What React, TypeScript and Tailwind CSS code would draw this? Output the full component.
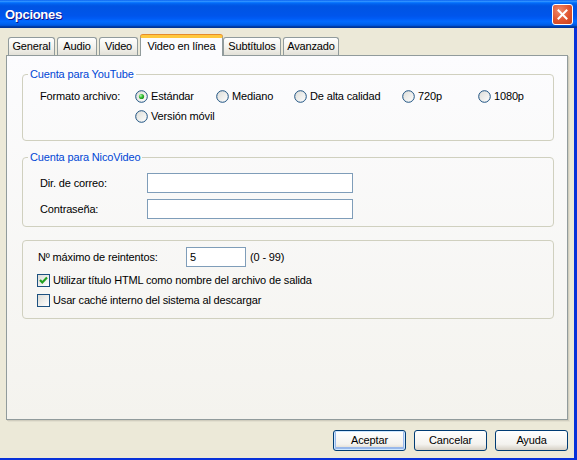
import React from 'react';

// Diálogo "Opciones" al estilo Windows XP (Luna), pestaña "Video en línea" activa.

const tabs = [
  { label: 'General', w: 'w-[47px]' },
  { label: 'Audio', w: 'w-[40px]' },
  { label: 'Video', w: 'w-[39px]' },
  { label: 'Video en línea', w: 'w-[83px]', active: true },
  { label: 'Subtítulos', w: 'w-[58px]' },
  { label: 'Avanzado', w: 'w-[56px]' },
];

function Radio({ checked = false }: { checked?: boolean }) {
  return (
    <svg width="13" height="13" viewBox="0 0 13 13" className="shrink-0">
      <defs>
        <linearGradient id="xpRadio" x1="0" y1="0" x2="1" y2="1">
          <stop offset="0" stopColor="#DCDCD7" />
          <stop offset="1" stopColor="#FFFFFF" />
        </linearGradient>
        <radialGradient id="xpDot" cx="0.35" cy="0.35" r="0.7">
          <stop offset="0" stopColor="#B9F3B9" />
          <stop offset="0.5" stopColor="#3AC43A" />
          <stop offset="1" stopColor="#1D8B1D" />
        </radialGradient>
      </defs>
      <circle cx="6.5" cy="6.5" r="5.8" fill="url(#xpRadio)" stroke="#1C5180" strokeWidth="1" />
      {checked && <circle cx="6.5" cy="6.5" r="2.6" fill="url(#xpDot)" />}
    </svg>
  );
}

function Checkbox({ checked = false }: { checked?: boolean }) {
  return (
    <span className="w-[13px] h-[13px] shrink-0 border border-[#1C5180] bg-[linear-gradient(135deg,#DCDCD7,#FFFFFF)] flex items-center justify-center">
      {checked && (
        <svg width="11" height="11" viewBox="0 0 11 11">
          <path d="M2 5 L4.3 7.5 L9 2.6" fill="none" stroke="#21A121" strokeWidth="2.2" />
        </svg>
      )}
    </span>
  );
}

function Option({ label, checked, w }: { label: string; checked?: boolean; w: string }) {
  return (
    <div className={`${w} flex items-center gap-[3px]`}>
      <Radio checked={checked} />
      <span>{label}</span>
    </div>
  );
}

function XpButton({ label, def }: { label: string; def?: boolean }) {
  return (
    <button
      className={`w-[73px] h-[21px] rounded-[3px] border border-[#003C74] bg-[linear-gradient(to_bottom,#FFFFFF,#F3F2EE_70%,#D6D0C5)] text-black ${
        def ? 'shadow-[inset_0_0_0_1px_#CEE7FF,inset_0_-1px_0_2px_#98B8EA]' : ''
      }`}
    >
      {label}
    </button>
  );
}

export default function App() {
  return (
    <div className="w-[577px] h-[460px] flex flex-col bg-[#ECE9D8] font-['Liberation_Sans',Arial,sans-serif] text-[11px] tracking-[-0.15px] text-black overflow-hidden">
      {/* barra de título */}
      <div className="h-[28px] shrink-0 flex items-center justify-between pl-[5px] pr-[4px] bg-[linear-gradient(to_bottom,#0058EE_0%,#3593FF_4%,#288EFF_6%,#127DFF_8%,#036FFC_10%,#0262EE_14%,#0057E5_20%,#0054E3_24%,#0055EB_56%,#005BF5_66%,#026AFE_76%,#0062EF_86%,#0052D6_92%,#0040AB_94%,#003092_100%)]">
        <span className="text-white font-bold text-[13px] tracking-[-0.3px] pt-[2px] [text-shadow:1px_1px_#0F1089]">Opciones</span>
        <div className="w-[21px] h-[21px] rounded-[3px] border border-white bg-[radial-gradient(circle_at_35%_30%,#F08A6C,#E0542F_55%,#C6411F)] flex items-center justify-center mt-[1px]">
          <svg width="11" height="11" viewBox="0 0 11 11">
            <path d="M1.5 1.5 L9.5 9.5 M9.5 1.5 L1.5 9.5" stroke="white" strokeWidth="2" strokeLinecap="square" />
          </svg>
        </div>
      </div>

      {/* cuerpo */}
      <div className="flex-1 flex flex-col pt-[7px] pl-[6px] pr-[6px] border-r-[3px] border-b-[2px] border-[#0831D9]">
        <div className="flex items-end gap-[2px] pl-[2px] -mb-px relative z-10">
          {tabs.map((t) =>
            t.active ? (
              <div
                key={t.label}
                className={`${t.w} -mr-[2px] h-[21px] flex items-center justify-center pb-[2px] rounded-t-[3px] border-x border-[#919B9C] border-t-[3px] border-t-[#FFC83C] shadow-[0_-1px_0_#E68B2C] bg-[#FCFCFE]`}
              >
                {t.label}
              </div>
            ) : (
              <div
                key={t.label}
                className={`${t.w} h-[18px] mb-[1px] flex items-center justify-center rounded-t-[3px] border-x border-t border-[#919B9C] bg-[linear-gradient(to_bottom,#FFFFFF,#F1F0EA_60%,#E3E1D8)]`}
              >
                {t.label}
              </div>
            )
          )}
        </div>

        <div className="flex-1 border border-[#919B9C] bg-[linear-gradient(to_bottom,#FCFCFE,#F4F3EE)] shadow-[1px_1px_0_#D0CDBE,2px_2px_0_#E2DFCF] pt-[12px] pl-[15px] pr-[13px] flex flex-col">
          <fieldset className="border border-[#D0D0BF] rounded-[4px] pl-[5px] pb-[14px]">
            <legend className="px-[2px] text-[#0046D5] leading-[13px]">Cuenta para YouTube</legend>
            <div className="flex ml-[12px] mt-[5px]">
              <div className="w-[95px] h-[20px] flex items-center">Formato archivo:</div>
              <div className="flex flex-col">
                <div className="flex h-[20px]">
                  <Option label="Estándar" checked w="w-[81px]" />
                  <Option label="Mediano" w="w-[78px]" />
                  <Option label="De alta calidad" w="w-[108px]" />
                  <Option label="720p" w="w-[76px]" />
                  <Option label="1080p" w="w-[60px]" />
                </div>
                <div className="flex h-[20px]">
                  <Option label="Versión móvil" w="w-[100px]" />
                </div>
              </div>
            </div>
          </fieldset>

          <fieldset className="mt-[10px] border border-[#D0D0BF] rounded-[4px] pl-[5px] pb-[7px]">
            <legend className="px-[2px] text-[#0046D5] leading-[13px]">Cuenta para NicoVideo</legend>
            <div className="ml-[12px] mt-[9px] flex flex-col gap-[6px]">
              <div className="flex items-center h-[20px]">
                <span className="w-[107px]">Dir. de correo:</span>
                <div className="w-[206px] h-[20px] border border-[#7F9DB9] bg-white" />
              </div>
              <div className="flex items-center h-[20px]">
                <span className="w-[107px]">Contraseña:</span>
                <div className="w-[206px] h-[20px] border border-[#7F9DB9] bg-white" />
              </div>
            </div>
          </fieldset>

          <fieldset className="mt-[13px] border border-[#D0D0BF] rounded-[4px] pl-[14px] pt-[6px] pb-[11px]">
            <div className="flex items-center h-[20px]">
              <span className="w-[149px] pl-[1px]">Nº máximo de reintentos:</span>
              <div className="w-[60px] h-[20px] border border-[#7F9DB9] bg-white flex items-center pl-[3px]">5</div>
              <span className="ml-[4px]">(0 - 99)</span>
            </div>
            <div className="flex items-center gap-[3px] h-[13px] mt-[7px]">
              <Checkbox checked />
              <span>Utilizar título HTML como nombre del archivo de salida</span>
            </div>
            <div className="flex items-center gap-[3px] h-[13px] mt-[7px]">
              <Checkbox />
              <span>Usar caché interno del sistema al descargar</span>
            </div>
          </fieldset>
        </div>

        <div className="h-[21px] mt-[10px] mb-[7px] flex justify-end gap-[8px]">
          <XpButton label="Aceptar" def />
          <XpButton label="Cancelar" />
          <XpButton label="Ayuda" />
        </div>
      </div>
    </div>
  );
}
